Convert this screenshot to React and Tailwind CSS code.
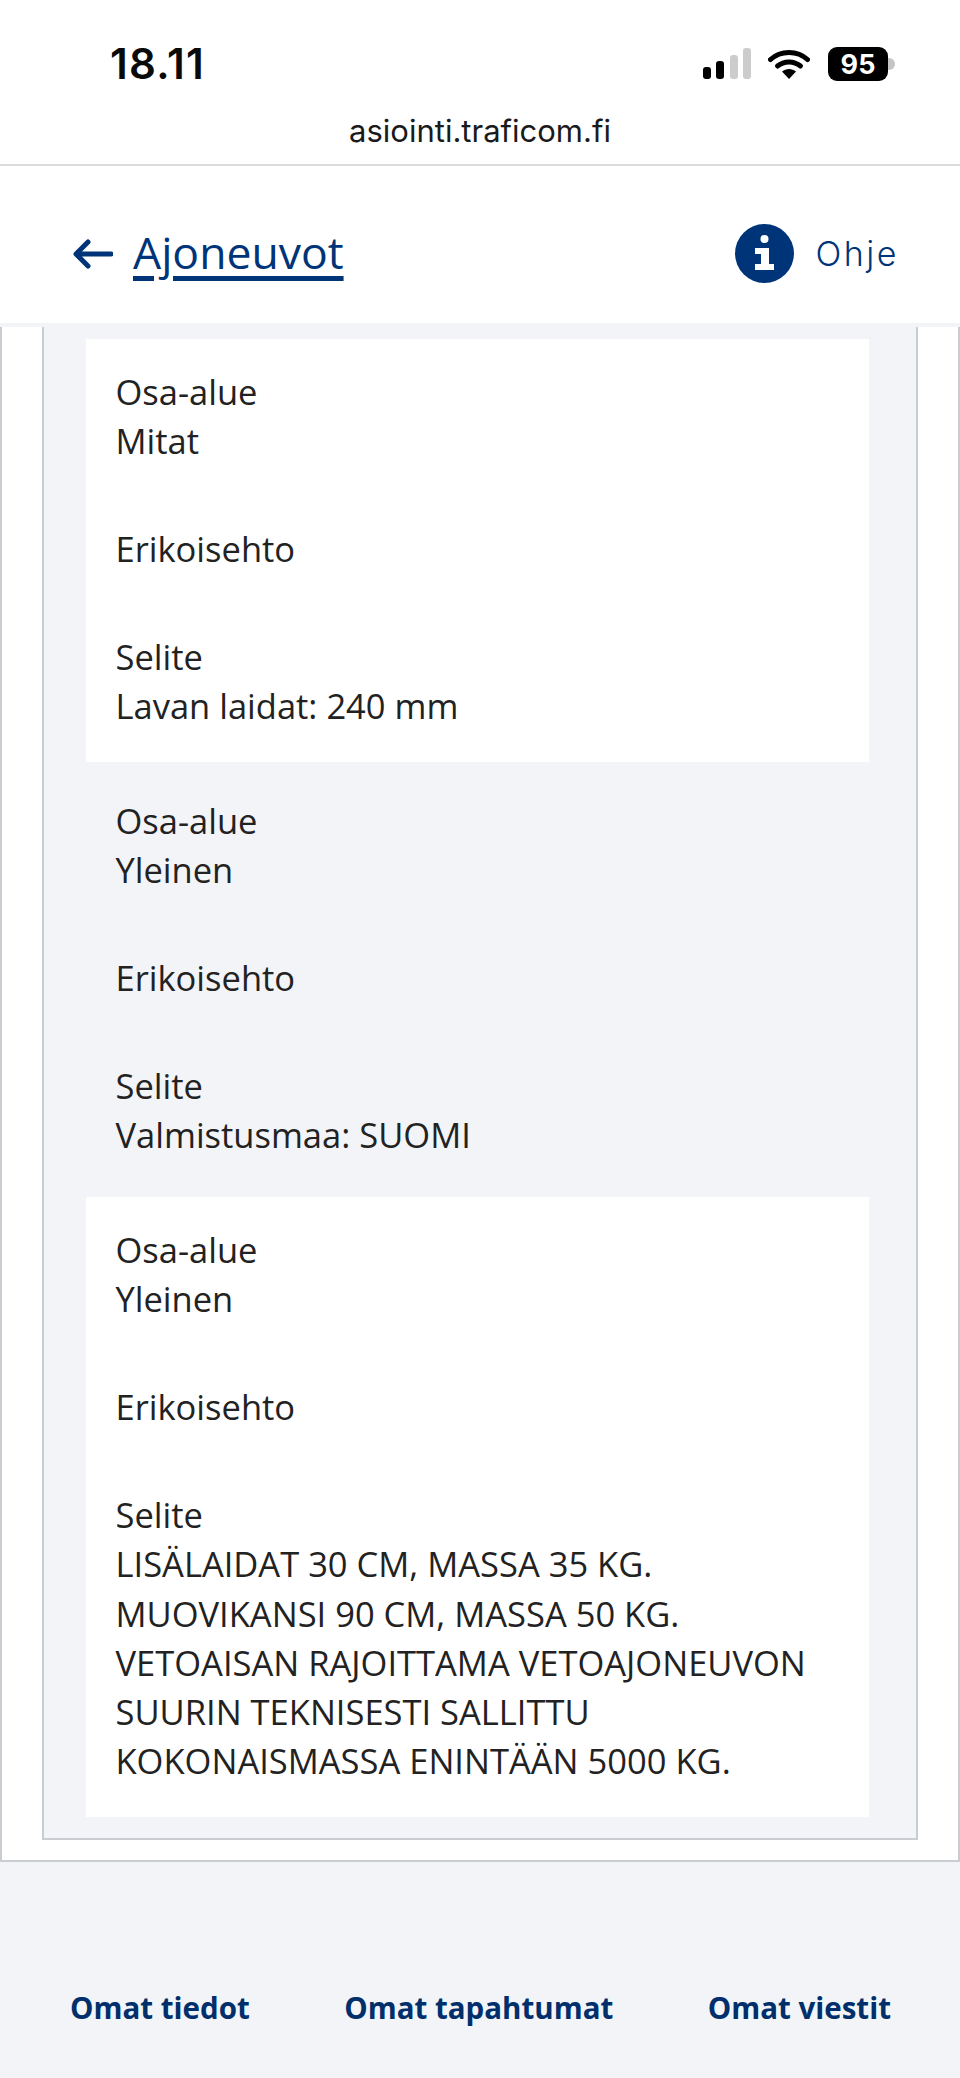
import React from "react";

const detailCards = [
  { area: "Mitat", text: ["Lavan laidat: 240 mm"], white: true },
  { area: "Yleinen", text: ["Valmistusmaa: SUOMI"], white: false },
  {
    area: "Yleinen",
    text: [
      "LISÄLAIDAT 30 CM, MASSA 35 KG.",
      "MUOVIKANSI 90 CM, MASSA 50 KG.",
      "VETOAISAN RAJOITTAMA VETOAJONEUVON",
      "SUURIN TEKNISESTI SALLITTU",
      "KOKONAISMASSA ENINTÄÄN 5000 KG.",
    ],
    white: true,
  },
];

const StatusIcons = () => (
  <div className="flex items-center">
    <svg width="48" height="32" viewBox="0 0 48 32" className="block">
      <rect x="0" y="19" width="8" height="12" rx="3" fill="#000" />
      <rect x="13" y="13" width="8" height="18" rx="3" fill="#000" />
      <rect x="27" y="7" width="8" height="24" rx="3" fill="#ccc" />
      <rect x="40" y="0" width="8" height="31" rx="3" fill="#ccc" />
    </svg>
    <svg width="42" height="32" viewBox="0 0 42 32" className="block ml-[17px]">
      <path d="M2.5 11.5C12.5 2 29.5 2 39.5 11.5" fill="none" stroke="#000" strokeWidth="5" strokeLinecap="round" />
      <path d="M9.5 18C16 12.5 26 12.5 32.500 18" fill="none" stroke="#000" strokeWidth="5" strokeLinecap="round" />
      <path d="M14 23.500C18 20 24 20 28 23.500L21 31Z" fill="#000" />
    </svg>
    <div className="ml-[18px] w-[60px] h-[34px] rounded-[9px] bg-black text-white flex items-center justify-center font-['Inter',sans-serif] font-bold text-[27px] leading-none">
      95
    </div>
    <div className="w-[7px] h-[12px] rounded-r-full bg-[#c4c4c4]" />
  </div>
);

const InfoIcon = () => (
  <svg width="59" height="59" viewBox="0 0 59 59" className="block">
    <circle cx="29.500" cy="29.500" r="29.500" fill="#003479" />
    <circle cx="29.500" cy="15" r="4" fill="#fff" />
    <path d="M20 24H34V40H39V46H20V40H26V30H20Z" fill="#fff" />
  </svg>
);

const DetailCard = ({ area, text, white }) => (
  <div className={`${white ? "bg-white" : ""} pl-[29.500px] pr-[29px] pt-[27.500px] pb-[31.500px] text-[34.500px] leading-[49.200px] text-[#222]`}>
    <div>Osa-alue</div>
    <div className="mb-[59px]">{area}</div>
    <div className="mb-[59px]">Erikoisehto</div>
    <div>Selite</div>
    {text.map((line) => (
      <div key={line}>{line}</div>
    ))}
  </div>
);

export default function App() {
  return (
    <div className="h-[2078px] overflow-hidden bg-[#f2f4f7] font-['Open_Sans',sans-serif]">
      <div className="bg-white h-[166px] border-b-2 border-[#dcdcdc]">
        <div className="flex items-center justify-between pl-[110px] pr-[65px] pt-[44px]">
          <span className="font-['Inter',sans-serif] font-semibold text-[42px] tracking-[1.2px] leading-[40px] text-[#0a0a0a]">18.11</span>
          <StatusIcons />
        </div>
        <div className="text-center font-['Inter',sans-serif] text-[31px] leading-[40px] text-[#1a1a1a] mt-[27px]">
          asiointi.traficom.fi
        </div>
      </div>

      <div className="bg-white h-[157px] pt-[18px] flex items-center justify-between pl-[73px] pr-[61px]">
        <div className="flex items-center gap-[20px] text-[#003479]">
          <svg width="40" height="30" viewBox="0 0 40 30" className="block">
            <path d="M38 15H4M15 3L3 15L15 27" fill="none" stroke="#003479" strokeWidth="5" strokeLinecap="round" strokeLinejoin="round" />
          </svg>
          <a className="text-[44.500px] leading-[56px] mb-[4px] underline decoration-[5px] underline-offset-[7px]">Ajoneuvot</a>
        </div>
        <div className="flex items-center gap-[22px]">
          <InfoIcon />
          <span className="font-['Inter',sans-serif] font-light text-[34px] tracking-[2.500px] text-[#003479]">Ohje</span>
        </div>
      </div>

      <div className="mt-[4px] bg-white border-2 border-t-0 border-[#c9ccd1] h-[1535px] pl-[40px] pr-[40px]">
        <div className="bg-[#f2f4f7] border-2 border-t-0 border-[#c9ccd1] h-[1513px] pt-[12px] pl-[42px] pr-[47px] flex flex-col gap-[6px]">
          {detailCards.map((card, i) => (
            <DetailCard key={i} {...card} />
          ))}
        </div>
      </div>

      <div className="flex justify-between pl-[70px] pr-[69px] mt-[125px] text-[29.500px] leading-[42px] font-bold text-[#002f6c]">
        <span>Omat tiedot</span>
        <span>Omat tapahtumat</span>
        <span>Omat viestit</span>
      </div>
    </div>
  );
}
